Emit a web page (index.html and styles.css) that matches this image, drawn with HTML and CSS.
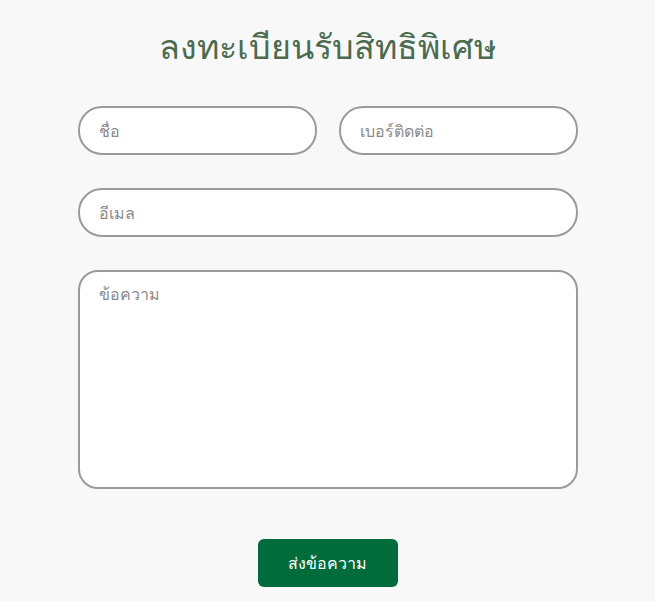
FILE: index.html
```html
<!DOCTYPE html>
<html lang="th">
<head>
    <meta charset="UTF-8">
    <meta name="viewport" content="width=device-width, initial-scale=1.0">
    <title>ลงทะเบียนรับสิทธิพิเศษ</title>
    <link rel="stylesheet" href="styles.css">
</head>
<body>

    <div id="container">
        <h2>ลงทะเบียนรับสิทธิพิเศษ</h2>

        <form class="register-form">
            <div class="row">
                <input type="text" placeholder="ชื่อ">
                <input type="text" placeholder="เบอร์ติดต่อ">
            </div>
            <div class="row">
                <input type="email" placeholder="อีเมล">
            </div>
            <div class="row">
                <textarea placeholder="ข้อความ"></textarea>
            </div>
            <div class="actions">
                <button type="button">ส่งข้อความ</button>
            </div>
        </form>
    </div>

</body>
</html>
```

FILE: styles.css
```css
body {
    font-family: "Noto Sans", "DejaVu Sans", sans-serif;
    background-color: #f8f8f8;
    color: #333;
    margin: 0;
    padding: 0;
}
#container {
    width: 500px;
    margin: 0 auto;
    padding-top: 26px;
}
h2 {
    text-align: center;
    color: #4b6b4f;
    font-size: 34px;
    font-weight: 500;
    margin: 0 0 40px;
    line-height: 40px;
}
.row {
    display: flex;
    gap: 22px;
    margin-bottom: 33px;
}
input, textarea {
    flex: 1;
    min-width: 0;
    box-sizing: border-box;
    border: 2px solid #9a9a9a;
    background: white;
    font-family: inherit;
    font-size: 16px;
    color: #333;
    outline: none;
}
input {
    height: 49px;
    border-radius: 24px;
    padding: 0 19px;
}
textarea {
    height: 219px;
    border-radius: 20px;
    padding: 10px 19px;
    resize: none;
}
input::placeholder, textarea::placeholder {
    color: #8a8a8a;
}
.actions {
    text-align: center;
    padding-top: 17px;
}
button {
    background-color: #006b3b;
    color: white;
    border: none;
    border-radius: 6px;
    width: 140px;
    height: 48px;
    font-family: inherit;
    font-size: 16px;
    cursor: pointer;
}
button:hover {
    background-color: #005a31;
}
```
